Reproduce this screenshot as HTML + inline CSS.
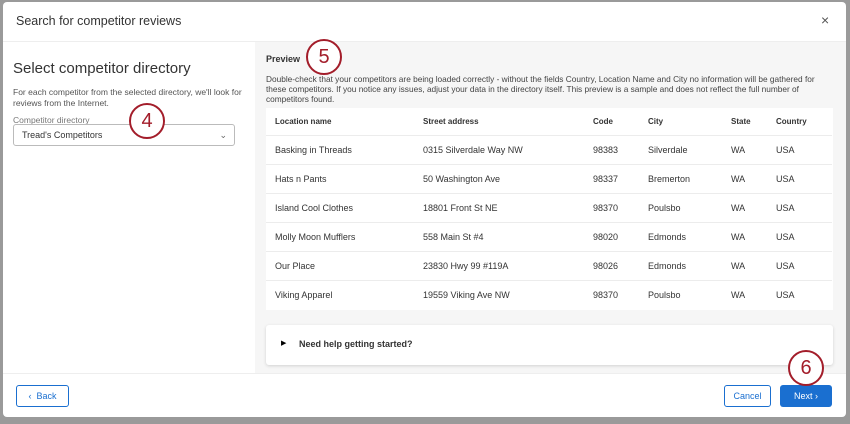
<!DOCTYPE html><html><head><style>
body{margin:0;width:850px;height:424px;background:#9a9a9a;font-family:"Liberation Sans",sans-serif;position:relative;overflow:hidden}
.m{position:absolute;left:3px;top:2px;width:843px;height:415px;background:#fff;border-radius:4px;overflow:hidden}
.a{position:absolute;white-space:nowrap}
.circ{position:absolute;width:32px;height:32px;border:2.5px solid #a31d2a;border-radius:50%;background:#fff;color:#a31d2a;font-size:20px;text-align:center;line-height:32px}
.row{position:absolute;left:11px;width:566px;height:29px;border-top:1px solid #ececec;font-size:9px;color:#333}
.row span{position:absolute;top:9px}
</style></head><body>
<div class="m">
<div class="a" style="left:13px;top:12px;font-size:12.5px;color:#333">Search for competitor reviews</div>
<div class="a" style="left:818px;top:10px;font-size:14px;color:#555">×</div>
<div style="position:absolute;left:0;top:39px;width:843px;height:1px;background:#eee"></div>
<div class="a" style="left:10px;top:58px;font-size:15px;color:#333">Select competitor directory</div>
<div class="a" style="left:10px;top:85px;font-size:8.5px;color:#555;line-height:10.5px">For each competitor from the selected directory, we'll look for<br>reviews from the Internet.</div>
<div class="a" style="left:10px;top:113px;font-size:8.5px;color:#777">Competitor directory</div>
<div style="position:absolute;left:10px;top:122px;width:220px;height:20px;border:1px solid #bbb;border-radius:3px;font-size:9px;color:#333;line-height:20px;text-indent:8px">Tread's Competitors<span style="position:absolute;right:7px;top:0;color:#666;font-size:9px">⌄</span></div>
<div class="circ" style="left:126px;top:101px">4</div>
<div style="position:absolute;left:252px;top:40px;width:591px;height:331px;background:#f6f6f6">
<div class="a" style="left:11px;top:12px;font-size:9px;font-weight:bold;color:#333">Preview</div>
<div class="a" style="left:11px;top:33px;font-size:8.3px;color:#444;line-height:9.8px">Double-check that your competitors are being loaded correctly - without the fields Country, Location Name and City no information will be gathered for<br>these competitors. If you notice any issues, adjust your data in the directory itself. This preview is a sample and does not reflect the full number of<br>competitors found.</div>
<div style="position:absolute;left:11px;top:66px;width:567px;height:202px;background:#fff">
<div class="row" style="left:0;top:0;border:0;font-weight:bold;font-size:8px"><span style="left:9px">Location name</span><span style="left:157px">Street address</span><span style="left:327px">Code</span><span style="left:382px">City</span><span style="left:465px">State</span><span style="left:510px">Country</span></div>
<div class="row" style="left:0;top:27px"><span style="left:9px">Basking in Threads</span><span style="left:157px">0315 Silverdale Way NW</span><span style="left:327px">98383</span><span style="left:382px">Silverdale</span><span style="left:465px">WA</span><span style="left:510px">USA</span></div>
<div class="row" style="left:0;top:56px"><span style="left:9px">Hats n Pants</span><span style="left:157px">50 Washington Ave</span><span style="left:327px">98337</span><span style="left:382px">Bremerton</span><span style="left:465px">WA</span><span style="left:510px">USA</span></div>
<div class="row" style="left:0;top:85px"><span style="left:9px">Island Cool Clothes</span><span style="left:157px">18801 Front St NE</span><span style="left:327px">98370</span><span style="left:382px">Poulsbo</span><span style="left:465px">WA</span><span style="left:510px">USA</span></div>
<div class="row" style="left:0;top:114px"><span style="left:9px">Molly Moon Mufflers</span><span style="left:157px">558 Main St #4</span><span style="left:327px">98020</span><span style="left:382px">Edmonds</span><span style="left:465px">WA</span><span style="left:510px">USA</span></div>
<div class="row" style="left:0;top:143px"><span style="left:9px">Our Place</span><span style="left:157px">23830 Hwy 99 #119A</span><span style="left:327px">98026</span><span style="left:382px">Edmonds</span><span style="left:465px">WA</span><span style="left:510px">USA</span></div>
<div class="row" style="left:0;top:172px"><span style="left:9px">Viking Apparel</span><span style="left:157px">19559 Viking Ave NW</span><span style="left:327px">98370</span><span style="left:382px">Poulsbo</span><span style="left:465px">WA</span><span style="left:510px">USA</span></div>
</div>
<div style="position:absolute;left:11px;top:283px;width:567px;height:40px;background:#fff;box-shadow:0 1px 3px rgba(0,0,0,.15);border-radius:3px">
<div class="a" style="left:15px;top:14px;font-size:7px">▶</div>
<div class="a" style="left:33px;top:14px;font-size:9px;font-weight:bold;color:#333">Need help getting started?</div></div>
</div>
<div class="circ" style="left:303px;top:37px">5</div>
<div style="position:absolute;left:0;top:371px;width:843px;height:1px;background:#eee"></div>
<div style="position:absolute;left:13px;top:383px;width:51px;height:20px;border:1px solid #1a6fd0;border-radius:3px;color:#1a6fd0;font-size:9px;line-height:20px;text-align:center">‹&nbsp;&nbsp;Back</div>
<div style="position:absolute;left:721px;top:383px;width:45px;height:20px;border:1px solid #1a6fd0;border-radius:3px;color:#1a6fd0;font-size:9px;line-height:20px;text-align:center">Cancel</div>
<div style="position:absolute;left:777px;top:383px;width:52px;height:22px;background:#1a6fd0;border-radius:3px;color:#fff;font-size:9px;line-height:22px;text-align:center">Next ›</div>
<div class="circ" style="left:785px;top:348px">6</div>
</div>
</body></html>
